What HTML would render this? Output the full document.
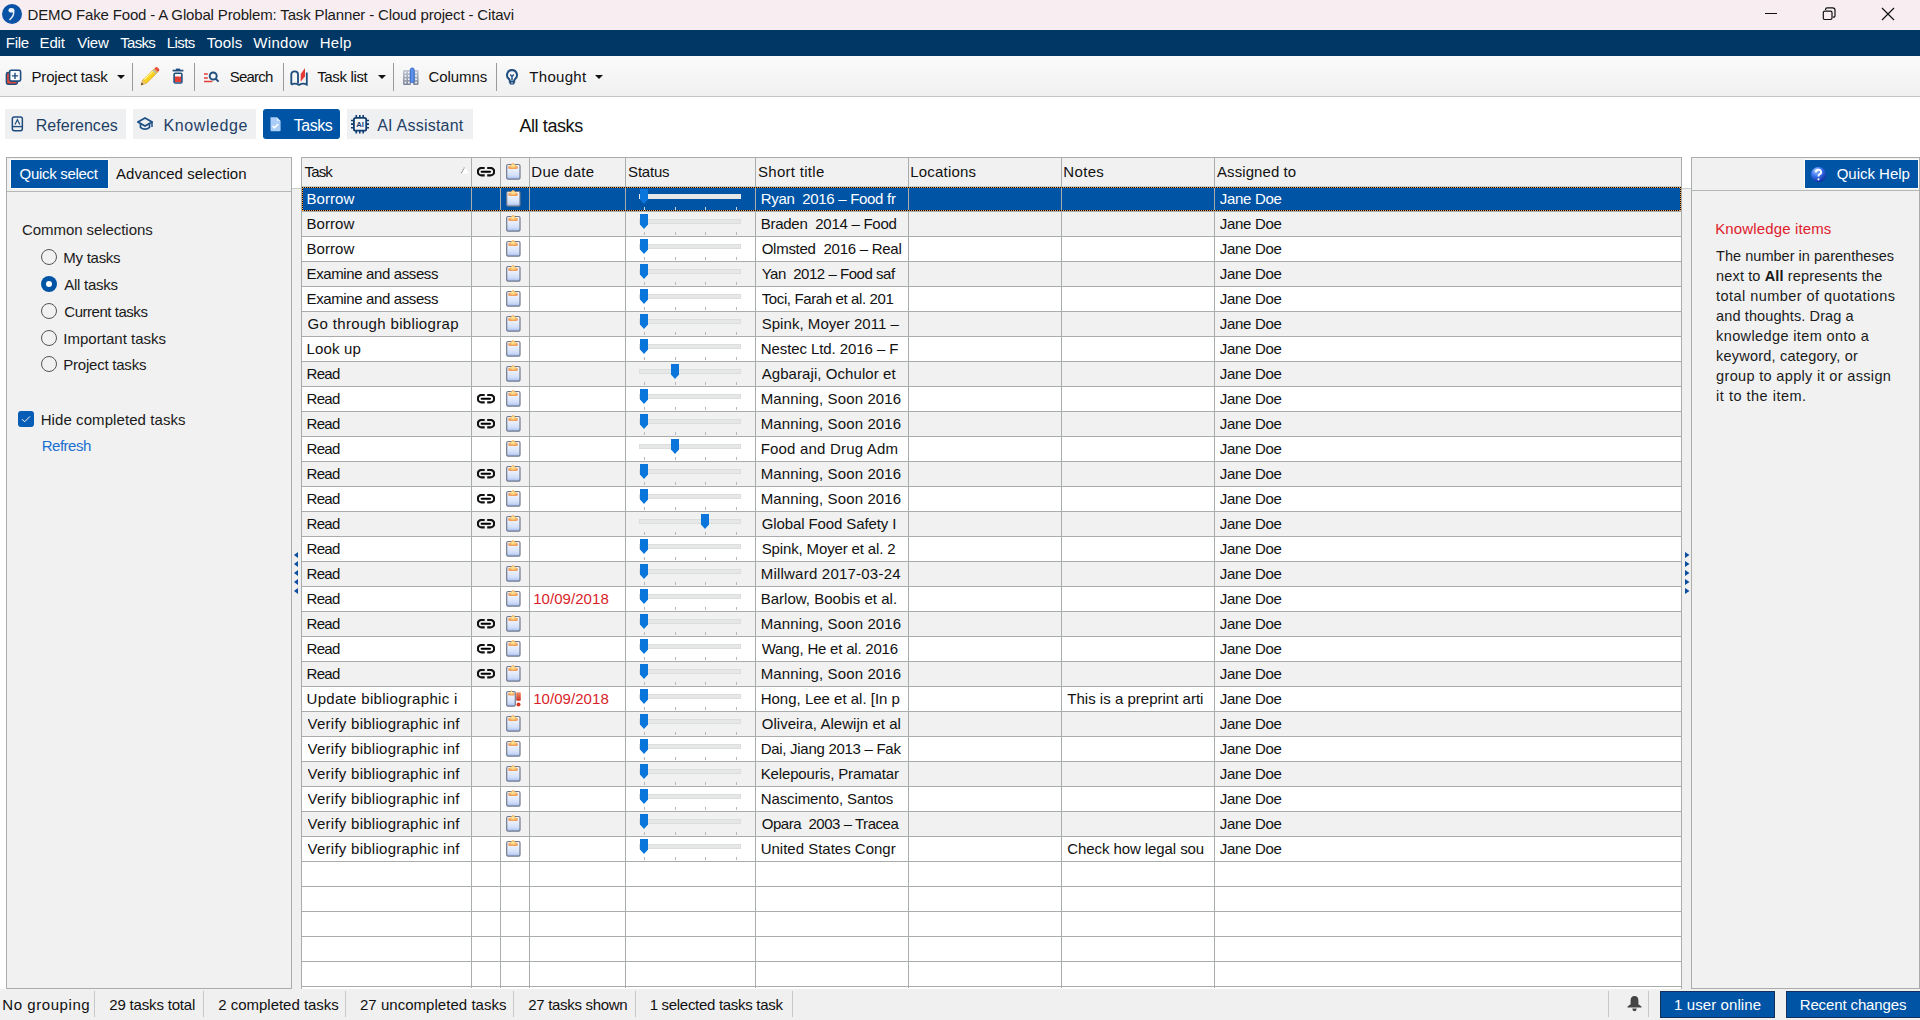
<!DOCTYPE html>
<html><head><meta charset="utf-8">
<style>
*{box-sizing:border-box;margin:0;padding:0}
html,body{width:1920px;height:1020px;overflow:hidden;background:#fff;font-family:"Liberation Sans",sans-serif;font-size:15px;color:#000;position:relative}
.abs{position:absolute}
#title{left:0;top:0;width:1920px;height:30px;background:#f8eef1}
#menu{left:0;top:30px;width:1920px;height:26px;background:#003764;color:#fff}
#menu span{position:absolute;top:4px;font-size:15px}
#tool{left:0;top:56px;width:1920px;height:41px;background:linear-gradient(#fbfbfb,#f0f0f0);border-bottom:1px solid #c4c4c4}
.tsep{position:absolute;top:7px;width:1px;height:28px;background:#9a9a9a}
.tt{position:absolute;top:12px;font-size:15px}
.dd{position:absolute;top:19px;width:0;height:0;border-left:4px solid transparent;border-right:4px solid transparent;border-top:4px solid #111}
.nav{position:absolute;top:109px;height:30px;background:#eff0f2;color:#1f3f66;font-size:16px}
.nav span{position:absolute;top:8px}
.nav.act{background:#0054a6;color:#fff;border-radius:3px}
.row{position:absolute;left:302px;width:1379px;height:24px}
.cell{position:absolute;top:0;height:24px;white-space:nowrap;overflow:hidden;font-size:15px;line-height:24px}
.vl{position:absolute;width:1px;background:#a8adab}
.hl{position:absolute;height:1px;background:#a8adab}
.trk{position:absolute;left:14px;top:7px;width:102px;height:5px;border:1px solid #dcdede}
.tick{position:absolute;top:20px;width:1px;height:3px}
.thumb{position:absolute;top:2px}
#status{left:0;top:989px;width:1920px;height:31px;background:#f0f0f0}
.st{position:absolute;top:6px;font-size:15px}
.ssep{position:absolute;top:2px;width:1px;height:26px;background:#c8c8c8}
</style></head><body>

<svg width="0" height="0" style="position:absolute"><defs><linearGradient id="cg" x1="0" y1="0" x2="0" y2="1"><stop offset="0" stop-color="#f7faff"/><stop offset="0.55" stop-color="#dfe8fb"/><stop offset="0.78" stop-color="#cfdcf8"/><stop offset="1" stop-color="#9fbaf0"/></linearGradient><radialGradient id="og" cx="0.5" cy="0.45" r="0.6"><stop offset="0" stop-color="#fff0a0"/><stop offset="0.5" stop-color="#f9c070"/><stop offset="1" stop-color="#ef8c4c"/></radialGradient><linearGradient id="rg" x1="0" y1="0" x2="0" y2="1"><stop offset="0" stop-color="#f6926a"/><stop offset="1" stop-color="#c8301e"/></linearGradient></defs></svg>
<div id="title" class="abs">
<svg class="abs" style="left:2px;top:4px" width="20" height="20" viewBox="0 0 20 20"><circle cx="10" cy="10" r="10" fill="#0a52a5"/><ellipse cx="9.4" cy="6.3" rx="2.9" ry="2.3" fill="#f2f6fb"/><path d="M11.6 6.4C12.2 10 10.6 13.2 7.9 15.5" fill="none" stroke="#e6eef8" stroke-width="1.5" stroke-linecap="round"/></svg>
<div class="abs" style="left:1765px;top:13px;width:12px;height:1px;background:#111"></div>
<svg class="abs" style="left:1822px;top:7px" width="14" height="14" viewBox="0 0 14 14"><path d="M3.6 3V2.3a1.5 1.5 0 0 1 1.5-1.5h5.6a2.3 2.3 0 0 1 2.3 2.3v5.6a1.5 1.5 0 0 1-1.5 1.5H10.8" fill="none" stroke="#111" stroke-width="1.2"/><rect x="1.3" y="4.1" width="8.7" height="8.4" rx="1.4" fill="none" stroke="#111" stroke-width="1.2"/></svg>
<svg class="abs" style="left:1881px;top:7px" width="14" height="14" viewBox="0 0 14 14"><path d="M1 1L13 13M13 1L1 13" stroke="#111" stroke-width="1.2"/></svg>
</div>
<div id="menu" class="abs">
</div>
<div id="tool" class="abs">
<svg class="abs" style="left:5px;top:13px" width="17" height="17" viewBox="0 0 17 17"><rect x="1.4" y="3.6" width="11" height="11.6" rx="1.6" fill="#e2483c" stroke="#1f4d7e" stroke-width="1.5"/><rect x="4.6" y="1.3" width="11" height="10.8" rx="1.6" fill="#fff" stroke="#1f4d7e" stroke-width="1.6"/><path d="M10 3.8v6.2M6.9 6.9h6.2" stroke="#1f4d7e" stroke-width="1.4"/></svg>
<div class="dd" style="left:117px"></div>
<div class="tsep" style="left:132px"></div>
<svg class="abs" style="left:140px;top:11px" width="20" height="19" viewBox="0 0 20 19"><path d="M1 18l1.8-5L14 2l3.5 3.3L6.3 16.3z" fill="#f7d21c" stroke="#e0a010" stroke-width="0.8"/><path d="M4.2 12.5l10.3-9.7" stroke="#fff38a" stroke-width="1.4"/><path d="M13 3l3.5 3.3" stroke="#b8b8b8" stroke-width="1.6"/><path d="M14.3 1.7l3.6 3.4 .8-.8a2 2 0 0 0-.1-2.8l-.8-.8a2 2 0 0 0-2.7 0z" fill="#e84d3c"/><path d="M1 18l1.8-5 3.5 3.3z" fill="#e8c27a"/><path d="M1 18l.8-2.2 1.5 1.4z" fill="#222"/></svg>
<svg class="abs" style="left:172px;top:12px" width="12" height="16" viewBox="0 0 12 16"><path d="M0.6 2.6h10.8" stroke="#1f4d7e" stroke-width="1.7"/><path d="M3.8 1.3h4.4" stroke="#1f4d7e" stroke-width="1.4"/><path d="M2.8 8.6c2-.5 4.4.4 6.4-.1V14H2.8z" fill="#e43c37"/><rect x="2.1" y="5.2" width="7.8" height="9.8" rx="1.3" fill="none" stroke="#1f4d7e" stroke-width="1.6"/></svg>
<div class="tsep" style="left:194px"></div>
<svg class="abs" style="left:203px;top:14px" width="17" height="14" viewBox="0 0 17 14"><path d="M1 4h3.8M1 8h3.8M1 11.6h8.4" stroke="#e43c37" stroke-width="1.5"/><circle cx="10.2" cy="6" r="3.5" fill="none" stroke="#1f4d7e" stroke-width="1.9"/><path d="M12.6 8.6L15.6 11.6" stroke="#1f4d7e" stroke-width="2"/></svg>
<div class="tsep" style="left:283px"></div>
<svg class="abs" style="left:289px;top:11px" width="19" height="20" viewBox="0 0 19 20"><path d="M2.3 17.6V7.2Q2.3 4.4 5.7 4.4Q9 4.4 9 7.2V16.6" fill="none" stroke="#1f4d7e" stroke-width="1.8"/><path d="M2.3 17.6Q6 15.6 10 18Q14 15.6 17.8 17.6V5.6" fill="none" stroke="#1f4d7e" stroke-width="1.8"/><path d="M11.7 7L16 1V9.6L11.7 14.8z" fill="#e43c37"/></svg>
<div class="dd" style="left:378px"></div>
<div class="tsep" style="left:393px"></div>
<svg class="abs" style="left:402px;top:11px" width="18" height="19" viewBox="0 0 18 19"><defs><linearGradient id="colg" x1="0" y1="0" x2="0" y2="1"><stop offset="0" stop-color="#c3c8d1"/><stop offset="1" stop-color="#7b8598"/></linearGradient></defs><rect x="1" y="3" width="8" height="15" rx="1.3" fill="url(#colg)"/><rect x="11" y="3" width="5.6" height="15" rx="1.3" fill="url(#colg)"/><rect x="2.6" y="4.7" width="1.7" height="1.7" fill="#f2f5fc"/><rect x="2.6" y="8.0" width="1.7" height="1.7" fill="#f2f5fc"/><rect x="2.6" y="11.4" width="1.7" height="1.7" fill="#f2f5fc"/><rect x="2.6" y="14.7" width="1.7" height="1.7" fill="#f2f5fc"/><rect x="6.0" y="4.7" width="1.7" height="1.7" fill="#f2f5fc"/><rect x="6.0" y="8.0" width="1.7" height="1.7" fill="#f2f5fc"/><rect x="6.0" y="11.4" width="1.7" height="1.7" fill="#f2f5fc"/><rect x="6.0" y="14.7" width="1.7" height="1.7" fill="#f2f5fc"/><rect x="13.2" y="4.7" width="1.7" height="1.7" fill="#f2f5fc"/><rect x="13.2" y="8.0" width="1.7" height="1.7" fill="#f2f5fc"/><rect x="13.2" y="11.4" width="1.7" height="1.7" fill="#f2f5fc"/><rect x="13.2" y="14.7" width="1.7" height="1.7" fill="#f2f5fc"/><rect x="8.3" y="1" width="3.9" height="14.6" rx="1.9" fill="#5b8fea" stroke="#2f66cc" stroke-width="0.9"/></svg>
<div class="tsep" style="left:496px"></div>
<svg class="abs" style="left:505px;top:13px" width="14" height="16" viewBox="0 0 14 16"><path d="M7 1a5 5 0 0 0-3.1 8.9c.6.5.9 1.1.9 1.8V12.6h4.4V11.7c0-.7.3-1.3.9-1.8A5 5 0 0 0 7 1z" fill="none" stroke="#1f4d7e" stroke-width="2"/><path d="M5.2 5.6L7 7.4L8.8 5.6M7 7.4V11" fill="none" stroke="#1f4d7e" stroke-width="1.4"/><rect x="4.5" y="12.3" width="5" height="3.2" rx="1" fill="#1f4d7e"/><rect x="6" y="13" width="2" height="1.5" fill="#8aa2bd"/></svg>
<div class="dd" style="left:595px"></div>

</div>
<div class="nav" style="left:5px;width:121px"><svg class="abs" style="left:6px;top:7px" width="13" height="16" viewBox="0 0 13 16"><rect x="1.35" y="1.05" width="10" height="13.6" rx="1.8" fill="none" stroke="#1f4d7e" stroke-width="1.5"/><path d="M1.35 10.6H11.35" stroke="#1f4d7e" stroke-width="1.4"/><path d="M4 8.6L6.4 3.7L8.8 8.6" fill="none" stroke="#1f4d7e" stroke-width="1.2"/></svg></div>
<div class="nav" style="left:133px;width:123px"><svg class="abs" style="left:4px;top:8px" width="16" height="14" viewBox="0 0 16 14"><path d="M8 1L1 5l7 4 7-4z" fill="none" stroke="#1f4f86" stroke-width="1.7"/><path d="M3.5 6.8v3.5c2.5 2.5 6.5 2.5 9 0V6.8" fill="none" stroke="#1f4f86" stroke-width="1.7"/><path d="M15 5v5" stroke="#1f4f86" stroke-width="1.5"/></svg></div>
<div class="nav act" style="left:263px;width:77px"><svg class="abs" style="left:6px;top:7px" width="13" height="16" viewBox="0 0 13 16"><path d="M1.5 1.2h6.3l3.8 3.8v9.2a1 1 0 0 1-1 1H2.5a1 1 0 0 1-1-1z" fill="#a9cdf6"/><path d="M7.8 1.2v3.8h3.8" fill="#d8e9fb"/><path d="M3.6 10l1.9 1.9 3.6-3.8" fill="none" stroke="#fff" stroke-width="1.5"/></svg></div>
<div class="nav" style="left:347px;width:126px"><svg class="abs" style="left:3px;top:4px" width="20" height="21" viewBox="0 0 20 21"><path d="M6.3 2v3M9.8 2v3M13.2 2v3M6.3 17.5v3M9.8 17.5v3M13.2 17.5v3M1 7.5h3M1 11.1h3M1 14.7h3M16 7.5h3M16 11.1h3M16 14.7h3" stroke="#0f3d70" stroke-width="1.6"/><rect x="3.9" y="4.9" width="12.3" height="12.8" rx="1.8" fill="#f5f6f8" stroke="#0f3d70" stroke-width="1.8"/><text x="10.1" y="13.9" font-size="7.6" font-family="Liberation Sans" font-weight="bold" text-anchor="middle" fill="#0f3d70">AI</text></svg></div>

<div class="abs" style="left:6px;top:157px;width:286px;height:832px;background:#f1f1f1;border:1px solid #a9adab"></div>
<div class="abs" style="left:7px;top:191px;width:284px;height:1px;background:#b4b9b6"></div>
<div class="abs" style="left:10px;top:159px;width:99px;height:30px;background:#fffdf8"></div><div class="abs" style="left:11px;top:160px;width:97px;height:28px;background:#0054a6"></div>

<div class="abs" style="left:41px;top:249px;width:16px;height:16px;border-radius:50%;border:1px solid #555"></div>
<div class="abs" style="left:41px;top:276px;width:16px;height:16px;border-radius:50%;background:#0054a6"></div><div class="abs" style="left:46px;top:281px;width:6px;height:6px;border-radius:50%;background:#fff"></div>
<div class="abs" style="left:41px;top:303px;width:16px;height:16px;border-radius:50%;border:1px solid #555"></div>
<div class="abs" style="left:41px;top:330px;width:16px;height:16px;border-radius:50%;border:1px solid #555"></div>
<div class="abs" style="left:41px;top:356px;width:16px;height:16px;border-radius:50%;border:1px solid #555"></div>
<div class="abs" style="left:18px;top:411px;width:16px;height:16px;border-radius:3px;background:#075db6"></div>
<svg class="abs" style="left:18px;top:411px" width="16" height="16" viewBox="0 0 16 16"><path d="M4 8.2l2.6 2.6L12 5.4" fill="none" stroke="#fff" stroke-width="1"/></svg>

<div class="abs" style="left:292px;top:188px;width:9px;height:801px;background:#f0f0f0"></div>
<div class="abs" style="left:292px;top:188px;width:9px;height:1px;background:#c8cccb"></div>
<div class="abs" style="left:1682px;top:188px;width:9px;height:801px;background:#f0f0f0"></div>
<div class="abs" style="left:1682px;top:188px;width:9px;height:1px;background:#c8cccb"></div>
<svg class="abs" style="left:293.5px;top:552px" width="4" height="6" viewBox="0 0 4 6"><path d="M4 0V6L0 3z" fill="#0a4c9e"/></svg>
<svg class="abs" style="left:1685px;top:552px" width="4.5" height="6" viewBox="0 0 4.5 6"><path d="M0 0V6L4.5 3z" fill="#0a4c9e"/></svg>
<svg class="abs" style="left:293.5px;top:561px" width="4" height="6" viewBox="0 0 4 6"><path d="M4 0V6L0 3z" fill="#0a4c9e"/></svg>
<svg class="abs" style="left:1685px;top:561px" width="4.5" height="6" viewBox="0 0 4.5 6"><path d="M0 0V6L4.5 3z" fill="#0a4c9e"/></svg>
<svg class="abs" style="left:293.5px;top:570px" width="4" height="6" viewBox="0 0 4 6"><path d="M4 0V6L0 3z" fill="#0a4c9e"/></svg>
<svg class="abs" style="left:1685px;top:570px" width="4.5" height="6" viewBox="0 0 4.5 6"><path d="M0 0V6L4.5 3z" fill="#0a4c9e"/></svg>
<svg class="abs" style="left:293.5px;top:579px" width="4" height="6" viewBox="0 0 4 6"><path d="M4 0V6L0 3z" fill="#0a4c9e"/></svg>
<svg class="abs" style="left:1685px;top:579px" width="4.5" height="6" viewBox="0 0 4.5 6"><path d="M0 0V6L4.5 3z" fill="#0a4c9e"/></svg>
<svg class="abs" style="left:293.5px;top:588px" width="4" height="6" viewBox="0 0 4 6"><path d="M4 0V6L0 3z" fill="#0a4c9e"/></svg>
<svg class="abs" style="left:1685px;top:588px" width="4.5" height="6" viewBox="0 0 4.5 6"><path d="M0 0V6L4.5 3z" fill="#0a4c9e"/></svg>
<div class="abs" style="left:301px;top:157px;width:1381px;height:830px;background:#fff;border:1px solid #a8adab"></div>
<div class="abs" style="left:302px;top:158px;width:1379px;height:29px;background:#f1f1f1"></div>
<svg class="abs" style="left:460px;top:166px" width="10" height="8" viewBox="0 0 10 8"><path d="M4.5 0.8L9.2 7.6H0.8z" fill="#fff"/><path d="M1.2 7.2L4.6 1.2" stroke="#8a8a8a" stroke-width="1.1" stroke-dasharray="1.2 0.6"/></svg>
<div class="abs" style="left:477px;top:167px;line-height:0"><svg width="18" height="10" viewBox="0 0 18 10"><path d="M7.7 0.9H4.6a3.75 3.75 0 0 0 0 7.5H7.7M10.2 0.9h3.2a3.75 3.75 0 0 1 0 7.5H10.2" fill="none" stroke="#111" stroke-width="2.2"/><path d="M4.6 4.65H13" stroke="#000" stroke-width="2" stroke-linecap="round"/></svg></div>
<div class="abs" style="left:505px;top:162px;line-height:0"><svg width="17" height="19" viewBox="0 0 17 19"><rect x="1.7" y="2.5" width="13.3" height="14.6" rx="1.4" fill="url(#cg)" stroke="#70798a" stroke-width="1.2"/><path d="M3.1 5.6Q3.1 3.3 5.6 3.2H6.1Q6.7 1 8.1 1Q9.5 1 10.1 3.2H10.6Q13 3.3 13 5.6Q13 7 11 7H5.1Q3.1 7 3.1 5.6z" fill="url(#og)"/></svg></div>
<div class="row" style="top:187px;background:#0054a6;color:#fff">
<div class="cell" style="left:4.50px;width:165px;letter-spacing:0.064px">Borrow</div>
<div class="abs" style="left:203px;top:2px;line-height:0"><svg width="17" height="19" viewBox="0 0 17 19"><rect x="1.7" y="2.5" width="13.3" height="14.6" rx="1.4" fill="url(#cg)" stroke="#70798a" stroke-width="1.2"/><path d="M3.1 5.6Q3.1 3.3 5.6 3.2H6.1Q6.7 1 8.1 1Q9.5 1 10.1 3.2H10.6Q13 3.3 13 5.6Q13 7 11 7H5.1Q3.1 7 3.1 5.6z" fill="url(#og)"/></svg></div>
<div class="abs" style="left:323px;top:0;width:130px;height:24px"><div class="trk" style="background:#e6e8e8;border-color:#e6e8e8"></div><div class="tick" style="left:19px;background:#d8d8d8"></div><div class="tick" style="left:50px;background:#d8d8d8"></div><div class="tick" style="left:80px;background:#d8d8d8"></div><div class="tick" style="left:111px;background:#d8d8d8"></div><svg class="thumb" style="left:15px" width="8" height="15" viewBox="0 0 8 15"><path d="M0 0H8V10.5L4 15L0 10.5Z" fill="#0a76dc"/></svg></div>
<div class="cell" style="left:458.70px;width:146px;letter-spacing:-0.301px">Ryan  2016 – Food fr</div>
<div class="cell" style="left:917.80px;width:200px;letter-spacing:-0.310px">Jane Doe</div>
</div>
<div class="row" style="top:212px;background:#f1f1f1;color:#111">
<div class="cell" style="left:4.50px;width:165px;letter-spacing:0.064px">Borrow</div>
<div class="abs" style="left:203px;top:2px;line-height:0"><svg width="17" height="19" viewBox="0 0 17 19"><rect x="1.7" y="2.5" width="13.3" height="14.6" rx="1.4" fill="url(#cg)" stroke="#70798a" stroke-width="1.2"/><path d="M3.1 5.6Q3.1 3.3 5.6 3.2H6.1Q6.7 1 8.1 1Q9.5 1 10.1 3.2H10.6Q13 3.3 13 5.6Q13 7 11 7H5.1Q3.1 7 3.1 5.6z" fill="url(#og)"/></svg></div>
<div class="abs" style="left:323px;top:0;width:130px;height:24px"><div class="trk" style="background:#e6e8e8;border-color:#dcdede"></div><div class="tick" style="left:19px;background:#b8b8b8"></div><div class="tick" style="left:50px;background:#b8b8b8"></div><div class="tick" style="left:80px;background:#b8b8b8"></div><div class="tick" style="left:111px;background:#b8b8b8"></div><svg class="thumb" style="left:15px" width="8" height="15" viewBox="0 0 8 15"><path d="M0 0H8V10.5L4 15L0 10.5Z" fill="#0a76dc"/></svg></div>
<div class="cell" style="left:458.70px;width:146px;letter-spacing:-0.267px">Braden  2014 – Food</div>
<div class="cell" style="left:917.80px;width:200px;letter-spacing:-0.310px">Jane Doe</div>
</div>
<div class="row" style="top:237px;background:#fff;color:#111">
<div class="cell" style="left:4.50px;width:165px;letter-spacing:0.064px">Borrow</div>
<div class="abs" style="left:203px;top:2px;line-height:0"><svg width="17" height="19" viewBox="0 0 17 19"><rect x="1.7" y="2.5" width="13.3" height="14.6" rx="1.4" fill="url(#cg)" stroke="#70798a" stroke-width="1.2"/><path d="M3.1 5.6Q3.1 3.3 5.6 3.2H6.1Q6.7 1 8.1 1Q9.5 1 10.1 3.2H10.6Q13 3.3 13 5.6Q13 7 11 7H5.1Q3.1 7 3.1 5.6z" fill="url(#og)"/></svg></div>
<div class="abs" style="left:323px;top:0;width:130px;height:24px"><div class="trk" style="background:#e6e8e8;border-color:#dcdede"></div><div class="tick" style="left:19px;background:#b8b8b8"></div><div class="tick" style="left:50px;background:#b8b8b8"></div><div class="tick" style="left:80px;background:#b8b8b8"></div><div class="tick" style="left:111px;background:#b8b8b8"></div><svg class="thumb" style="left:15px" width="8" height="15" viewBox="0 0 8 15"><path d="M0 0H8V10.5L4 15L0 10.5Z" fill="#0a76dc"/></svg></div>
<div class="cell" style="left:459.70px;width:146px;letter-spacing:-0.266px">Olmsted  2016 – Real</div>
<div class="cell" style="left:917.80px;width:200px;letter-spacing:-0.310px">Jane Doe</div>
</div>
<div class="row" style="top:262px;background:#f1f1f1;color:#111">
<div class="cell" style="left:4.50px;width:165px;letter-spacing:-0.377px">Examine and assess</div>
<div class="abs" style="left:203px;top:2px;line-height:0"><svg width="17" height="19" viewBox="0 0 17 19"><rect x="1.7" y="2.5" width="13.3" height="14.6" rx="1.4" fill="url(#cg)" stroke="#70798a" stroke-width="1.2"/><path d="M3.1 5.6Q3.1 3.3 5.6 3.2H6.1Q6.7 1 8.1 1Q9.5 1 10.1 3.2H10.6Q13 3.3 13 5.6Q13 7 11 7H5.1Q3.1 7 3.1 5.6z" fill="url(#og)"/></svg></div>
<div class="abs" style="left:323px;top:0;width:130px;height:24px"><div class="trk" style="background:#e6e8e8;border-color:#dcdede"></div><div class="tick" style="left:19px;background:#b8b8b8"></div><div class="tick" style="left:50px;background:#b8b8b8"></div><div class="tick" style="left:80px;background:#b8b8b8"></div><div class="tick" style="left:111px;background:#b8b8b8"></div><svg class="thumb" style="left:15px" width="8" height="15" viewBox="0 0 8 15"><path d="M0 0H8V10.5L4 15L0 10.5Z" fill="#0a76dc"/></svg></div>
<div class="cell" style="left:459.70px;width:146px;letter-spacing:-0.471px">Yan  2012 – Food saf</div>
<div class="cell" style="left:917.80px;width:200px;letter-spacing:-0.310px">Jane Doe</div>
</div>
<div class="row" style="top:287px;background:#fff;color:#111">
<div class="cell" style="left:4.50px;width:165px;letter-spacing:-0.377px">Examine and assess</div>
<div class="abs" style="left:203px;top:2px;line-height:0"><svg width="17" height="19" viewBox="0 0 17 19"><rect x="1.7" y="2.5" width="13.3" height="14.6" rx="1.4" fill="url(#cg)" stroke="#70798a" stroke-width="1.2"/><path d="M3.1 5.6Q3.1 3.3 5.6 3.2H6.1Q6.7 1 8.1 1Q9.5 1 10.1 3.2H10.6Q13 3.3 13 5.6Q13 7 11 7H5.1Q3.1 7 3.1 5.6z" fill="url(#og)"/></svg></div>
<div class="abs" style="left:323px;top:0;width:130px;height:24px"><div class="trk" style="background:#e6e8e8;border-color:#dcdede"></div><div class="tick" style="left:19px;background:#b8b8b8"></div><div class="tick" style="left:50px;background:#b8b8b8"></div><div class="tick" style="left:80px;background:#b8b8b8"></div><div class="tick" style="left:111px;background:#b8b8b8"></div><svg class="thumb" style="left:15px" width="8" height="15" viewBox="0 0 8 15"><path d="M0 0H8V10.5L4 15L0 10.5Z" fill="#0a76dc"/></svg></div>
<div class="cell" style="left:459.70px;width:146px;letter-spacing:-0.383px">Toci, Farah et al. 201</div>
<div class="cell" style="left:917.80px;width:200px;letter-spacing:-0.310px">Jane Doe</div>
</div>
<div class="row" style="top:312px;background:#f1f1f1;color:#111">
<div class="cell" style="left:5.50px;width:165px;letter-spacing:0.341px">Go through bibliograp</div>
<div class="abs" style="left:203px;top:2px;line-height:0"><svg width="17" height="19" viewBox="0 0 17 19"><rect x="1.7" y="2.5" width="13.3" height="14.6" rx="1.4" fill="url(#cg)" stroke="#70798a" stroke-width="1.2"/><path d="M3.1 5.6Q3.1 3.3 5.6 3.2H6.1Q6.7 1 8.1 1Q9.5 1 10.1 3.2H10.6Q13 3.3 13 5.6Q13 7 11 7H5.1Q3.1 7 3.1 5.6z" fill="url(#og)"/></svg></div>
<div class="abs" style="left:323px;top:0;width:130px;height:24px"><div class="trk" style="background:#e6e8e8;border-color:#dcdede"></div><div class="tick" style="left:19px;background:#b8b8b8"></div><div class="tick" style="left:50px;background:#b8b8b8"></div><div class="tick" style="left:80px;background:#b8b8b8"></div><div class="tick" style="left:111px;background:#b8b8b8"></div><svg class="thumb" style="left:15px" width="8" height="15" viewBox="0 0 8 15"><path d="M0 0H8V10.5L4 15L0 10.5Z" fill="#0a76dc"/></svg></div>
<div class="cell" style="left:459.70px;width:146px;letter-spacing:0.043px">Spink, Moyer 2011 –</div>
<div class="cell" style="left:917.80px;width:200px;letter-spacing:-0.310px">Jane Doe</div>
</div>
<div class="row" style="top:337px;background:#fff;color:#111">
<div class="cell" style="left:4.50px;width:165px;letter-spacing:0.161px">Look up</div>
<div class="abs" style="left:203px;top:2px;line-height:0"><svg width="17" height="19" viewBox="0 0 17 19"><rect x="1.7" y="2.5" width="13.3" height="14.6" rx="1.4" fill="url(#cg)" stroke="#70798a" stroke-width="1.2"/><path d="M3.1 5.6Q3.1 3.3 5.6 3.2H6.1Q6.7 1 8.1 1Q9.5 1 10.1 3.2H10.6Q13 3.3 13 5.6Q13 7 11 7H5.1Q3.1 7 3.1 5.6z" fill="url(#og)"/></svg></div>
<div class="abs" style="left:323px;top:0;width:130px;height:24px"><div class="trk" style="background:#e6e8e8;border-color:#dcdede"></div><div class="tick" style="left:19px;background:#b8b8b8"></div><div class="tick" style="left:50px;background:#b8b8b8"></div><div class="tick" style="left:80px;background:#b8b8b8"></div><div class="tick" style="left:111px;background:#b8b8b8"></div><svg class="thumb" style="left:15px" width="8" height="15" viewBox="0 0 8 15"><path d="M0 0H8V10.5L4 15L0 10.5Z" fill="#0a76dc"/></svg></div>
<div class="cell" style="left:458.70px;width:146px;letter-spacing:-0.078px">Nestec Ltd. 2016 – F</div>
<div class="cell" style="left:917.80px;width:200px;letter-spacing:-0.310px">Jane Doe</div>
</div>
<div class="row" style="top:362px;background:#f1f1f1;color:#111">
<div class="cell" style="left:4.50px;width:165px;letter-spacing:-0.672px">Read</div>
<div class="abs" style="left:203px;top:2px;line-height:0"><svg width="17" height="19" viewBox="0 0 17 19"><rect x="1.7" y="2.5" width="13.3" height="14.6" rx="1.4" fill="url(#cg)" stroke="#70798a" stroke-width="1.2"/><path d="M3.1 5.6Q3.1 3.3 5.6 3.2H6.1Q6.7 1 8.1 1Q9.5 1 10.1 3.2H10.6Q13 3.3 13 5.6Q13 7 11 7H5.1Q3.1 7 3.1 5.6z" fill="url(#og)"/></svg></div>
<div class="abs" style="left:323px;top:0;width:130px;height:24px"><div class="trk" style="background:#e6e8e8;border-color:#dcdede"></div><div class="tick" style="left:19px;background:#b8b8b8"></div><div class="tick" style="left:50px;background:#b8b8b8"></div><div class="tick" style="left:80px;background:#b8b8b8"></div><div class="tick" style="left:111px;background:#b8b8b8"></div><svg class="thumb" style="left:46px" width="8" height="15" viewBox="0 0 8 15"><path d="M0 0H8V10.5L4 15L0 10.5Z" fill="#0a76dc"/></svg></div>
<div class="cell" style="left:459.70px;width:146px;letter-spacing:0.074px">Agbaraji, Ochulor et</div>
<div class="cell" style="left:917.80px;width:200px;letter-spacing:-0.310px">Jane Doe</div>
</div>
<div class="row" style="top:387px;background:#fff;color:#111">
<div class="cell" style="left:4.50px;width:165px;letter-spacing:-0.672px">Read</div>
<div class="abs" style="left:175px;top:7px;line-height:0"><svg width="18" height="10" viewBox="0 0 18 10"><path d="M7.7 0.9H4.6a3.75 3.75 0 0 0 0 7.5H7.7M10.2 0.9h3.2a3.75 3.75 0 0 1 0 7.5H10.2" fill="none" stroke="#111" stroke-width="2.2"/><path d="M4.6 4.65H13" stroke="#000" stroke-width="2" stroke-linecap="round"/></svg></div>
<div class="abs" style="left:203px;top:2px;line-height:0"><svg width="17" height="19" viewBox="0 0 17 19"><rect x="1.7" y="2.5" width="13.3" height="14.6" rx="1.4" fill="url(#cg)" stroke="#70798a" stroke-width="1.2"/><path d="M3.1 5.6Q3.1 3.3 5.6 3.2H6.1Q6.7 1 8.1 1Q9.5 1 10.1 3.2H10.6Q13 3.3 13 5.6Q13 7 11 7H5.1Q3.1 7 3.1 5.6z" fill="url(#og)"/></svg></div>
<div class="abs" style="left:323px;top:0;width:130px;height:24px"><div class="trk" style="background:#e6e8e8;border-color:#dcdede"></div><div class="tick" style="left:19px;background:#b8b8b8"></div><div class="tick" style="left:50px;background:#b8b8b8"></div><div class="tick" style="left:80px;background:#b8b8b8"></div><div class="tick" style="left:111px;background:#b8b8b8"></div><svg class="thumb" style="left:15px" width="8" height="15" viewBox="0 0 8 15"><path d="M0 0H8V10.5L4 15L0 10.5Z" fill="#0a76dc"/></svg></div>
<div class="cell" style="left:458.70px;width:146px;letter-spacing:0.118px">Manning, Soon 2016</div>
<div class="cell" style="left:917.80px;width:200px;letter-spacing:-0.310px">Jane Doe</div>
</div>
<div class="row" style="top:412px;background:#f1f1f1;color:#111">
<div class="cell" style="left:4.50px;width:165px;letter-spacing:-0.672px">Read</div>
<div class="abs" style="left:175px;top:7px;line-height:0"><svg width="18" height="10" viewBox="0 0 18 10"><path d="M7.7 0.9H4.6a3.75 3.75 0 0 0 0 7.5H7.7M10.2 0.9h3.2a3.75 3.75 0 0 1 0 7.5H10.2" fill="none" stroke="#111" stroke-width="2.2"/><path d="M4.6 4.65H13" stroke="#000" stroke-width="2" stroke-linecap="round"/></svg></div>
<div class="abs" style="left:203px;top:2px;line-height:0"><svg width="17" height="19" viewBox="0 0 17 19"><rect x="1.7" y="2.5" width="13.3" height="14.6" rx="1.4" fill="url(#cg)" stroke="#70798a" stroke-width="1.2"/><path d="M3.1 5.6Q3.1 3.3 5.6 3.2H6.1Q6.7 1 8.1 1Q9.5 1 10.1 3.2H10.6Q13 3.3 13 5.6Q13 7 11 7H5.1Q3.1 7 3.1 5.6z" fill="url(#og)"/></svg></div>
<div class="abs" style="left:323px;top:0;width:130px;height:24px"><div class="trk" style="background:#e6e8e8;border-color:#dcdede"></div><div class="tick" style="left:19px;background:#b8b8b8"></div><div class="tick" style="left:50px;background:#b8b8b8"></div><div class="tick" style="left:80px;background:#b8b8b8"></div><div class="tick" style="left:111px;background:#b8b8b8"></div><svg class="thumb" style="left:15px" width="8" height="15" viewBox="0 0 8 15"><path d="M0 0H8V10.5L4 15L0 10.5Z" fill="#0a76dc"/></svg></div>
<div class="cell" style="left:458.70px;width:146px;letter-spacing:0.118px">Manning, Soon 2016</div>
<div class="cell" style="left:917.80px;width:200px;letter-spacing:-0.310px">Jane Doe</div>
</div>
<div class="row" style="top:437px;background:#fff;color:#111">
<div class="cell" style="left:4.50px;width:165px;letter-spacing:-0.672px">Read</div>
<div class="abs" style="left:203px;top:2px;line-height:0"><svg width="17" height="19" viewBox="0 0 17 19"><rect x="1.7" y="2.5" width="13.3" height="14.6" rx="1.4" fill="url(#cg)" stroke="#70798a" stroke-width="1.2"/><path d="M3.1 5.6Q3.1 3.3 5.6 3.2H6.1Q6.7 1 8.1 1Q9.5 1 10.1 3.2H10.6Q13 3.3 13 5.6Q13 7 11 7H5.1Q3.1 7 3.1 5.6z" fill="url(#og)"/></svg></div>
<div class="abs" style="left:323px;top:0;width:130px;height:24px"><div class="trk" style="background:#e6e8e8;border-color:#dcdede"></div><div class="tick" style="left:19px;background:#b8b8b8"></div><div class="tick" style="left:50px;background:#b8b8b8"></div><div class="tick" style="left:80px;background:#b8b8b8"></div><div class="tick" style="left:111px;background:#b8b8b8"></div><svg class="thumb" style="left:46px" width="8" height="15" viewBox="0 0 8 15"><path d="M0 0H8V10.5L4 15L0 10.5Z" fill="#0a76dc"/></svg></div>
<div class="cell" style="left:458.70px;width:146px;letter-spacing:0.189px">Food and Drug Adm</div>
<div class="cell" style="left:917.80px;width:200px;letter-spacing:-0.310px">Jane Doe</div>
</div>
<div class="row" style="top:462px;background:#f1f1f1;color:#111">
<div class="cell" style="left:4.50px;width:165px;letter-spacing:-0.672px">Read</div>
<div class="abs" style="left:175px;top:7px;line-height:0"><svg width="18" height="10" viewBox="0 0 18 10"><path d="M7.7 0.9H4.6a3.75 3.75 0 0 0 0 7.5H7.7M10.2 0.9h3.2a3.75 3.75 0 0 1 0 7.5H10.2" fill="none" stroke="#111" stroke-width="2.2"/><path d="M4.6 4.65H13" stroke="#000" stroke-width="2" stroke-linecap="round"/></svg></div>
<div class="abs" style="left:203px;top:2px;line-height:0"><svg width="17" height="19" viewBox="0 0 17 19"><rect x="1.7" y="2.5" width="13.3" height="14.6" rx="1.4" fill="url(#cg)" stroke="#70798a" stroke-width="1.2"/><path d="M3.1 5.6Q3.1 3.3 5.6 3.2H6.1Q6.7 1 8.1 1Q9.5 1 10.1 3.2H10.6Q13 3.3 13 5.6Q13 7 11 7H5.1Q3.1 7 3.1 5.6z" fill="url(#og)"/></svg></div>
<div class="abs" style="left:323px;top:0;width:130px;height:24px"><div class="trk" style="background:#e6e8e8;border-color:#dcdede"></div><div class="tick" style="left:19px;background:#b8b8b8"></div><div class="tick" style="left:50px;background:#b8b8b8"></div><div class="tick" style="left:80px;background:#b8b8b8"></div><div class="tick" style="left:111px;background:#b8b8b8"></div><svg class="thumb" style="left:15px" width="8" height="15" viewBox="0 0 8 15"><path d="M0 0H8V10.5L4 15L0 10.5Z" fill="#0a76dc"/></svg></div>
<div class="cell" style="left:458.70px;width:146px;letter-spacing:0.118px">Manning, Soon 2016</div>
<div class="cell" style="left:917.80px;width:200px;letter-spacing:-0.310px">Jane Doe</div>
</div>
<div class="row" style="top:487px;background:#fff;color:#111">
<div class="cell" style="left:4.50px;width:165px;letter-spacing:-0.672px">Read</div>
<div class="abs" style="left:175px;top:7px;line-height:0"><svg width="18" height="10" viewBox="0 0 18 10"><path d="M7.7 0.9H4.6a3.75 3.75 0 0 0 0 7.5H7.7M10.2 0.9h3.2a3.75 3.75 0 0 1 0 7.5H10.2" fill="none" stroke="#111" stroke-width="2.2"/><path d="M4.6 4.65H13" stroke="#000" stroke-width="2" stroke-linecap="round"/></svg></div>
<div class="abs" style="left:203px;top:2px;line-height:0"><svg width="17" height="19" viewBox="0 0 17 19"><rect x="1.7" y="2.5" width="13.3" height="14.6" rx="1.4" fill="url(#cg)" stroke="#70798a" stroke-width="1.2"/><path d="M3.1 5.6Q3.1 3.3 5.6 3.2H6.1Q6.7 1 8.1 1Q9.5 1 10.1 3.2H10.6Q13 3.3 13 5.6Q13 7 11 7H5.1Q3.1 7 3.1 5.6z" fill="url(#og)"/></svg></div>
<div class="abs" style="left:323px;top:0;width:130px;height:24px"><div class="trk" style="background:#e6e8e8;border-color:#dcdede"></div><div class="tick" style="left:19px;background:#b8b8b8"></div><div class="tick" style="left:50px;background:#b8b8b8"></div><div class="tick" style="left:80px;background:#b8b8b8"></div><div class="tick" style="left:111px;background:#b8b8b8"></div><svg class="thumb" style="left:15px" width="8" height="15" viewBox="0 0 8 15"><path d="M0 0H8V10.5L4 15L0 10.5Z" fill="#0a76dc"/></svg></div>
<div class="cell" style="left:458.70px;width:146px;letter-spacing:0.118px">Manning, Soon 2016</div>
<div class="cell" style="left:917.80px;width:200px;letter-spacing:-0.310px">Jane Doe</div>
</div>
<div class="row" style="top:512px;background:#f1f1f1;color:#111">
<div class="cell" style="left:4.50px;width:165px;letter-spacing:-0.672px">Read</div>
<div class="abs" style="left:175px;top:7px;line-height:0"><svg width="18" height="10" viewBox="0 0 18 10"><path d="M7.7 0.9H4.6a3.75 3.75 0 0 0 0 7.5H7.7M10.2 0.9h3.2a3.75 3.75 0 0 1 0 7.5H10.2" fill="none" stroke="#111" stroke-width="2.2"/><path d="M4.6 4.65H13" stroke="#000" stroke-width="2" stroke-linecap="round"/></svg></div>
<div class="abs" style="left:203px;top:2px;line-height:0"><svg width="17" height="19" viewBox="0 0 17 19"><rect x="1.7" y="2.5" width="13.3" height="14.6" rx="1.4" fill="url(#cg)" stroke="#70798a" stroke-width="1.2"/><path d="M3.1 5.6Q3.1 3.3 5.6 3.2H6.1Q6.7 1 8.1 1Q9.5 1 10.1 3.2H10.6Q13 3.3 13 5.6Q13 7 11 7H5.1Q3.1 7 3.1 5.6z" fill="url(#og)"/></svg></div>
<div class="abs" style="left:323px;top:0;width:130px;height:24px"><div class="trk" style="background:#e6e8e8;border-color:#dcdede"></div><div class="tick" style="left:19px;background:#b8b8b8"></div><div class="tick" style="left:50px;background:#b8b8b8"></div><div class="tick" style="left:80px;background:#b8b8b8"></div><div class="tick" style="left:111px;background:#b8b8b8"></div><svg class="thumb" style="left:76px" width="8" height="15" viewBox="0 0 8 15"><path d="M0 0H8V10.5L4 15L0 10.5Z" fill="#0a76dc"/></svg></div>
<div class="cell" style="left:459.70px;width:146px;letter-spacing:-0.104px">Global Food Safety I</div>
<div class="cell" style="left:917.80px;width:200px;letter-spacing:-0.310px">Jane Doe</div>
</div>
<div class="row" style="top:537px;background:#fff;color:#111">
<div class="cell" style="left:4.50px;width:165px;letter-spacing:-0.672px">Read</div>
<div class="abs" style="left:203px;top:2px;line-height:0"><svg width="17" height="19" viewBox="0 0 17 19"><rect x="1.7" y="2.5" width="13.3" height="14.6" rx="1.4" fill="url(#cg)" stroke="#70798a" stroke-width="1.2"/><path d="M3.1 5.6Q3.1 3.3 5.6 3.2H6.1Q6.7 1 8.1 1Q9.5 1 10.1 3.2H10.6Q13 3.3 13 5.6Q13 7 11 7H5.1Q3.1 7 3.1 5.6z" fill="url(#og)"/></svg></div>
<div class="abs" style="left:323px;top:0;width:130px;height:24px"><div class="trk" style="background:#e6e8e8;border-color:#dcdede"></div><div class="tick" style="left:19px;background:#b8b8b8"></div><div class="tick" style="left:50px;background:#b8b8b8"></div><div class="tick" style="left:80px;background:#b8b8b8"></div><div class="tick" style="left:111px;background:#b8b8b8"></div><svg class="thumb" style="left:15px" width="8" height="15" viewBox="0 0 8 15"><path d="M0 0H8V10.5L4 15L0 10.5Z" fill="#0a76dc"/></svg></div>
<div class="cell" style="left:459.70px;width:146px;letter-spacing:-0.139px">Spink, Moyer et al. 2</div>
<div class="cell" style="left:917.80px;width:200px;letter-spacing:-0.310px">Jane Doe</div>
</div>
<div class="row" style="top:562px;background:#f1f1f1;color:#111">
<div class="cell" style="left:4.50px;width:165px;letter-spacing:-0.672px">Read</div>
<div class="abs" style="left:203px;top:2px;line-height:0"><svg width="17" height="19" viewBox="0 0 17 19"><rect x="1.7" y="2.5" width="13.3" height="14.6" rx="1.4" fill="url(#cg)" stroke="#70798a" stroke-width="1.2"/><path d="M3.1 5.6Q3.1 3.3 5.6 3.2H6.1Q6.7 1 8.1 1Q9.5 1 10.1 3.2H10.6Q13 3.3 13 5.6Q13 7 11 7H5.1Q3.1 7 3.1 5.6z" fill="url(#og)"/></svg></div>
<div class="abs" style="left:323px;top:0;width:130px;height:24px"><div class="trk" style="background:#e6e8e8;border-color:#dcdede"></div><div class="tick" style="left:19px;background:#b8b8b8"></div><div class="tick" style="left:50px;background:#b8b8b8"></div><div class="tick" style="left:80px;background:#b8b8b8"></div><div class="tick" style="left:111px;background:#b8b8b8"></div><svg class="thumb" style="left:15px" width="8" height="15" viewBox="0 0 8 15"><path d="M0 0H8V10.5L4 15L0 10.5Z" fill="#0a76dc"/></svg></div>
<div class="cell" style="left:458.70px;width:146px;letter-spacing:0.219px">Millward 2017-03-24</div>
<div class="cell" style="left:917.80px;width:200px;letter-spacing:-0.310px">Jane Doe</div>
</div>
<div class="row" style="top:587px;background:#fff;color:#111">
<div class="cell" style="left:4.50px;width:165px;letter-spacing:-0.672px">Read</div>
<div class="abs" style="left:203px;top:2px;line-height:0"><svg width="17" height="19" viewBox="0 0 17 19"><rect x="1.7" y="2.5" width="13.3" height="14.6" rx="1.4" fill="url(#cg)" stroke="#70798a" stroke-width="1.2"/><path d="M3.1 5.6Q3.1 3.3 5.6 3.2H6.1Q6.7 1 8.1 1Q9.5 1 10.1 3.2H10.6Q13 3.3 13 5.6Q13 7 11 7H5.1Q3.1 7 3.1 5.6z" fill="url(#og)"/></svg></div>
<div class="cell" style="left:231.20px;width:92px;color:#d81e2a;letter-spacing:0.052px">10/09/2018</div>
<div class="abs" style="left:323px;top:0;width:130px;height:24px"><div class="trk" style="background:#e6e8e8;border-color:#dcdede"></div><div class="tick" style="left:19px;background:#b8b8b8"></div><div class="tick" style="left:50px;background:#b8b8b8"></div><div class="tick" style="left:80px;background:#b8b8b8"></div><div class="tick" style="left:111px;background:#b8b8b8"></div><svg class="thumb" style="left:15px" width="8" height="15" viewBox="0 0 8 15"><path d="M0 0H8V10.5L4 15L0 10.5Z" fill="#0a76dc"/></svg></div>
<div class="cell" style="left:458.70px;width:146px;letter-spacing:0.023px">Barlow, Boobis et al.</div>
<div class="cell" style="left:917.80px;width:200px;letter-spacing:-0.310px">Jane Doe</div>
</div>
<div class="row" style="top:612px;background:#f1f1f1;color:#111">
<div class="cell" style="left:4.50px;width:165px;letter-spacing:-0.672px">Read</div>
<div class="abs" style="left:175px;top:7px;line-height:0"><svg width="18" height="10" viewBox="0 0 18 10"><path d="M7.7 0.9H4.6a3.75 3.75 0 0 0 0 7.5H7.7M10.2 0.9h3.2a3.75 3.75 0 0 1 0 7.5H10.2" fill="none" stroke="#111" stroke-width="2.2"/><path d="M4.6 4.65H13" stroke="#000" stroke-width="2" stroke-linecap="round"/></svg></div>
<div class="abs" style="left:203px;top:2px;line-height:0"><svg width="17" height="19" viewBox="0 0 17 19"><rect x="1.7" y="2.5" width="13.3" height="14.6" rx="1.4" fill="url(#cg)" stroke="#70798a" stroke-width="1.2"/><path d="M3.1 5.6Q3.1 3.3 5.6 3.2H6.1Q6.7 1 8.1 1Q9.5 1 10.1 3.2H10.6Q13 3.3 13 5.6Q13 7 11 7H5.1Q3.1 7 3.1 5.6z" fill="url(#og)"/></svg></div>
<div class="abs" style="left:323px;top:0;width:130px;height:24px"><div class="trk" style="background:#e6e8e8;border-color:#dcdede"></div><div class="tick" style="left:19px;background:#b8b8b8"></div><div class="tick" style="left:50px;background:#b8b8b8"></div><div class="tick" style="left:80px;background:#b8b8b8"></div><div class="tick" style="left:111px;background:#b8b8b8"></div><svg class="thumb" style="left:15px" width="8" height="15" viewBox="0 0 8 15"><path d="M0 0H8V10.5L4 15L0 10.5Z" fill="#0a76dc"/></svg></div>
<div class="cell" style="left:458.70px;width:146px;letter-spacing:0.118px">Manning, Soon 2016</div>
<div class="cell" style="left:917.80px;width:200px;letter-spacing:-0.310px">Jane Doe</div>
</div>
<div class="row" style="top:637px;background:#fff;color:#111">
<div class="cell" style="left:4.50px;width:165px;letter-spacing:-0.672px">Read</div>
<div class="abs" style="left:175px;top:7px;line-height:0"><svg width="18" height="10" viewBox="0 0 18 10"><path d="M7.7 0.9H4.6a3.75 3.75 0 0 0 0 7.5H7.7M10.2 0.9h3.2a3.75 3.75 0 0 1 0 7.5H10.2" fill="none" stroke="#111" stroke-width="2.2"/><path d="M4.6 4.65H13" stroke="#000" stroke-width="2" stroke-linecap="round"/></svg></div>
<div class="abs" style="left:203px;top:2px;line-height:0"><svg width="17" height="19" viewBox="0 0 17 19"><rect x="1.7" y="2.5" width="13.3" height="14.6" rx="1.4" fill="url(#cg)" stroke="#70798a" stroke-width="1.2"/><path d="M3.1 5.6Q3.1 3.3 5.6 3.2H6.1Q6.7 1 8.1 1Q9.5 1 10.1 3.2H10.6Q13 3.3 13 5.6Q13 7 11 7H5.1Q3.1 7 3.1 5.6z" fill="url(#og)"/></svg></div>
<div class="abs" style="left:323px;top:0;width:130px;height:24px"><div class="trk" style="background:#e6e8e8;border-color:#dcdede"></div><div class="tick" style="left:19px;background:#b8b8b8"></div><div class="tick" style="left:50px;background:#b8b8b8"></div><div class="tick" style="left:80px;background:#b8b8b8"></div><div class="tick" style="left:111px;background:#b8b8b8"></div><svg class="thumb" style="left:15px" width="8" height="15" viewBox="0 0 8 15"><path d="M0 0H8V10.5L4 15L0 10.5Z" fill="#0a76dc"/></svg></div>
<div class="cell" style="left:459.70px;width:146px;letter-spacing:-0.212px">Wang, He et al. 2016</div>
<div class="cell" style="left:917.80px;width:200px;letter-spacing:-0.310px">Jane Doe</div>
</div>
<div class="row" style="top:662px;background:#f1f1f1;color:#111">
<div class="cell" style="left:4.50px;width:165px;letter-spacing:-0.672px">Read</div>
<div class="abs" style="left:175px;top:7px;line-height:0"><svg width="18" height="10" viewBox="0 0 18 10"><path d="M7.7 0.9H4.6a3.75 3.75 0 0 0 0 7.5H7.7M10.2 0.9h3.2a3.75 3.75 0 0 1 0 7.5H10.2" fill="none" stroke="#111" stroke-width="2.2"/><path d="M4.6 4.65H13" stroke="#000" stroke-width="2" stroke-linecap="round"/></svg></div>
<div class="abs" style="left:203px;top:2px;line-height:0"><svg width="17" height="19" viewBox="0 0 17 19"><rect x="1.7" y="2.5" width="13.3" height="14.6" rx="1.4" fill="url(#cg)" stroke="#70798a" stroke-width="1.2"/><path d="M3.1 5.6Q3.1 3.3 5.6 3.2H6.1Q6.7 1 8.1 1Q9.5 1 10.1 3.2H10.6Q13 3.3 13 5.6Q13 7 11 7H5.1Q3.1 7 3.1 5.6z" fill="url(#og)"/></svg></div>
<div class="abs" style="left:323px;top:0;width:130px;height:24px"><div class="trk" style="background:#e6e8e8;border-color:#dcdede"></div><div class="tick" style="left:19px;background:#b8b8b8"></div><div class="tick" style="left:50px;background:#b8b8b8"></div><div class="tick" style="left:80px;background:#b8b8b8"></div><div class="tick" style="left:111px;background:#b8b8b8"></div><svg class="thumb" style="left:15px" width="8" height="15" viewBox="0 0 8 15"><path d="M0 0H8V10.5L4 15L0 10.5Z" fill="#0a76dc"/></svg></div>
<div class="cell" style="left:458.70px;width:146px;letter-spacing:0.118px">Manning, Soon 2016</div>
<div class="cell" style="left:917.80px;width:200px;letter-spacing:-0.310px">Jane Doe</div>
</div>
<div class="row" style="top:687px;background:#fff;color:#111">
<div class="cell" style="left:4.50px;width:165px;letter-spacing:0.313px">Update bibliographic i</div>
<div class="abs" style="left:203px;top:2px;line-height:0"><svg width="17" height="19" viewBox="0 0 17 19"><rect x="1.7" y="2.5" width="8.6" height="14.6" rx="1.3" fill="url(#cg)" stroke="#70798a" stroke-width="1.2"/><path d="M3 5.2Q3 3.3 5 3.2H5.6Q6 1 6.4 1Q6.8 1 7.2 3.2H8Q9.8 3.3 9.8 5.2Q9.8 6.6 8 6.6H4.8Q3 6.6 3 5.2z" fill="url(#og)"/><rect x="11.2" y="3.2" width="4.6" height="8.6" rx="1" fill="url(#rg)"/><circle cx="13.5" cy="15.6" r="2" fill="#d9381f"/></svg></div>
<div class="cell" style="left:231.20px;width:92px;color:#d81e2a;letter-spacing:0.052px">10/09/2018</div>
<div class="abs" style="left:323px;top:0;width:130px;height:24px"><div class="trk" style="background:#e6e8e8;border-color:#dcdede"></div><div class="tick" style="left:19px;background:#b8b8b8"></div><div class="tick" style="left:50px;background:#b8b8b8"></div><div class="tick" style="left:80px;background:#b8b8b8"></div><div class="tick" style="left:111px;background:#b8b8b8"></div><svg class="thumb" style="left:15px" width="8" height="15" viewBox="0 0 8 15"><path d="M0 0H8V10.5L4 15L0 10.5Z" fill="#0a76dc"/></svg></div>
<div class="cell" style="left:458.70px;width:146px;letter-spacing:-0.001px">Hong, Lee et al. [In p</div>
<div class="cell" style="left:765.30px;width:146px;letter-spacing:0.012px">This is a preprint arti</div>
<div class="cell" style="left:917.80px;width:200px;letter-spacing:-0.310px">Jane Doe</div>
</div>
<div class="row" style="top:712px;background:#f1f1f1;color:#111">
<div class="cell" style="left:5.50px;width:165px;letter-spacing:0.263px">Verify bibliographic inf</div>
<div class="abs" style="left:203px;top:2px;line-height:0"><svg width="17" height="19" viewBox="0 0 17 19"><rect x="1.7" y="2.5" width="13.3" height="14.6" rx="1.4" fill="url(#cg)" stroke="#70798a" stroke-width="1.2"/><path d="M3.1 5.6Q3.1 3.3 5.6 3.2H6.1Q6.7 1 8.1 1Q9.5 1 10.1 3.2H10.6Q13 3.3 13 5.6Q13 7 11 7H5.1Q3.1 7 3.1 5.6z" fill="url(#og)"/></svg></div>
<div class="abs" style="left:323px;top:0;width:130px;height:24px"><div class="trk" style="background:#e6e8e8;border-color:#dcdede"></div><div class="tick" style="left:19px;background:#b8b8b8"></div><div class="tick" style="left:50px;background:#b8b8b8"></div><div class="tick" style="left:80px;background:#b8b8b8"></div><div class="tick" style="left:111px;background:#b8b8b8"></div><svg class="thumb" style="left:15px" width="8" height="15" viewBox="0 0 8 15"><path d="M0 0H8V10.5L4 15L0 10.5Z" fill="#0a76dc"/></svg></div>
<div class="cell" style="left:459.70px;width:146px;letter-spacing:0.037px">Oliveira, Alewijn et al</div>
<div class="cell" style="left:917.80px;width:200px;letter-spacing:-0.310px">Jane Doe</div>
</div>
<div class="row" style="top:737px;background:#fff;color:#111">
<div class="cell" style="left:5.50px;width:165px;letter-spacing:0.263px">Verify bibliographic inf</div>
<div class="abs" style="left:203px;top:2px;line-height:0"><svg width="17" height="19" viewBox="0 0 17 19"><rect x="1.7" y="2.5" width="13.3" height="14.6" rx="1.4" fill="url(#cg)" stroke="#70798a" stroke-width="1.2"/><path d="M3.1 5.6Q3.1 3.3 5.6 3.2H6.1Q6.7 1 8.1 1Q9.5 1 10.1 3.2H10.6Q13 3.3 13 5.6Q13 7 11 7H5.1Q3.1 7 3.1 5.6z" fill="url(#og)"/></svg></div>
<div class="abs" style="left:323px;top:0;width:130px;height:24px"><div class="trk" style="background:#e6e8e8;border-color:#dcdede"></div><div class="tick" style="left:19px;background:#b8b8b8"></div><div class="tick" style="left:50px;background:#b8b8b8"></div><div class="tick" style="left:80px;background:#b8b8b8"></div><div class="tick" style="left:111px;background:#b8b8b8"></div><svg class="thumb" style="left:15px" width="8" height="15" viewBox="0 0 8 15"><path d="M0 0H8V10.5L4 15L0 10.5Z" fill="#0a76dc"/></svg></div>
<div class="cell" style="left:458.70px;width:146px;letter-spacing:-0.286px">Dai, Jiang 2013 – Fak</div>
<div class="cell" style="left:917.80px;width:200px;letter-spacing:-0.310px">Jane Doe</div>
</div>
<div class="row" style="top:762px;background:#f1f1f1;color:#111">
<div class="cell" style="left:5.50px;width:165px;letter-spacing:0.263px">Verify bibliographic inf</div>
<div class="abs" style="left:203px;top:2px;line-height:0"><svg width="17" height="19" viewBox="0 0 17 19"><rect x="1.7" y="2.5" width="13.3" height="14.6" rx="1.4" fill="url(#cg)" stroke="#70798a" stroke-width="1.2"/><path d="M3.1 5.6Q3.1 3.3 5.6 3.2H6.1Q6.7 1 8.1 1Q9.5 1 10.1 3.2H10.6Q13 3.3 13 5.6Q13 7 11 7H5.1Q3.1 7 3.1 5.6z" fill="url(#og)"/></svg></div>
<div class="abs" style="left:323px;top:0;width:130px;height:24px"><div class="trk" style="background:#e6e8e8;border-color:#dcdede"></div><div class="tick" style="left:19px;background:#b8b8b8"></div><div class="tick" style="left:50px;background:#b8b8b8"></div><div class="tick" style="left:80px;background:#b8b8b8"></div><div class="tick" style="left:111px;background:#b8b8b8"></div><svg class="thumb" style="left:15px" width="8" height="15" viewBox="0 0 8 15"><path d="M0 0H8V10.5L4 15L0 10.5Z" fill="#0a76dc"/></svg></div>
<div class="cell" style="left:458.70px;width:146px;letter-spacing:-0.137px">Kelepouris, Pramatar</div>
<div class="cell" style="left:917.80px;width:200px;letter-spacing:-0.310px">Jane Doe</div>
</div>
<div class="row" style="top:787px;background:#fff;color:#111">
<div class="cell" style="left:5.50px;width:165px;letter-spacing:0.263px">Verify bibliographic inf</div>
<div class="abs" style="left:203px;top:2px;line-height:0"><svg width="17" height="19" viewBox="0 0 17 19"><rect x="1.7" y="2.5" width="13.3" height="14.6" rx="1.4" fill="url(#cg)" stroke="#70798a" stroke-width="1.2"/><path d="M3.1 5.6Q3.1 3.3 5.6 3.2H6.1Q6.7 1 8.1 1Q9.5 1 10.1 3.2H10.6Q13 3.3 13 5.6Q13 7 11 7H5.1Q3.1 7 3.1 5.6z" fill="url(#og)"/></svg></div>
<div class="abs" style="left:323px;top:0;width:130px;height:24px"><div class="trk" style="background:#e6e8e8;border-color:#dcdede"></div><div class="tick" style="left:19px;background:#b8b8b8"></div><div class="tick" style="left:50px;background:#b8b8b8"></div><div class="tick" style="left:80px;background:#b8b8b8"></div><div class="tick" style="left:111px;background:#b8b8b8"></div><svg class="thumb" style="left:15px" width="8" height="15" viewBox="0 0 8 15"><path d="M0 0H8V10.5L4 15L0 10.5Z" fill="#0a76dc"/></svg></div>
<div class="cell" style="left:458.70px;width:146px;letter-spacing:-0.096px">Nascimento, Santos</div>
<div class="cell" style="left:917.80px;width:200px;letter-spacing:-0.310px">Jane Doe</div>
</div>
<div class="row" style="top:812px;background:#f1f1f1;color:#111">
<div class="cell" style="left:5.50px;width:165px;letter-spacing:0.263px">Verify bibliographic inf</div>
<div class="abs" style="left:203px;top:2px;line-height:0"><svg width="17" height="19" viewBox="0 0 17 19"><rect x="1.7" y="2.5" width="13.3" height="14.6" rx="1.4" fill="url(#cg)" stroke="#70798a" stroke-width="1.2"/><path d="M3.1 5.6Q3.1 3.3 5.6 3.2H6.1Q6.7 1 8.1 1Q9.5 1 10.1 3.2H10.6Q13 3.3 13 5.6Q13 7 11 7H5.1Q3.1 7 3.1 5.6z" fill="url(#og)"/></svg></div>
<div class="abs" style="left:323px;top:0;width:130px;height:24px"><div class="trk" style="background:#e6e8e8;border-color:#dcdede"></div><div class="tick" style="left:19px;background:#b8b8b8"></div><div class="tick" style="left:50px;background:#b8b8b8"></div><div class="tick" style="left:80px;background:#b8b8b8"></div><div class="tick" style="left:111px;background:#b8b8b8"></div><svg class="thumb" style="left:15px" width="8" height="15" viewBox="0 0 8 15"><path d="M0 0H8V10.5L4 15L0 10.5Z" fill="#0a76dc"/></svg></div>
<div class="cell" style="left:459.70px;width:146px;letter-spacing:-0.466px">Opara  2003 – Tracea</div>
<div class="cell" style="left:917.80px;width:200px;letter-spacing:-0.310px">Jane Doe</div>
</div>
<div class="row" style="top:837px;background:#fff;color:#111">
<div class="cell" style="left:5.50px;width:165px;letter-spacing:0.263px">Verify bibliographic inf</div>
<div class="abs" style="left:203px;top:2px;line-height:0"><svg width="17" height="19" viewBox="0 0 17 19"><rect x="1.7" y="2.5" width="13.3" height="14.6" rx="1.4" fill="url(#cg)" stroke="#70798a" stroke-width="1.2"/><path d="M3.1 5.6Q3.1 3.3 5.6 3.2H6.1Q6.7 1 8.1 1Q9.5 1 10.1 3.2H10.6Q13 3.3 13 5.6Q13 7 11 7H5.1Q3.1 7 3.1 5.6z" fill="url(#og)"/></svg></div>
<div class="abs" style="left:323px;top:0;width:130px;height:24px"><div class="trk" style="background:#e6e8e8;border-color:#dcdede"></div><div class="tick" style="left:19px;background:#b8b8b8"></div><div class="tick" style="left:50px;background:#b8b8b8"></div><div class="tick" style="left:80px;background:#b8b8b8"></div><div class="tick" style="left:111px;background:#b8b8b8"></div><svg class="thumb" style="left:15px" width="8" height="15" viewBox="0 0 8 15"><path d="M0 0H8V10.5L4 15L0 10.5Z" fill="#0a76dc"/></svg></div>
<div class="cell" style="left:458.70px;width:146px;letter-spacing:-0.004px">United States Congr</div>
<div class="cell" style="left:765.30px;width:146px;letter-spacing:-0.087px">Check how legal sou</div>
<div class="cell" style="left:917.80px;width:200px;letter-spacing:-0.310px">Jane Doe</div>
</div>
<div class="hl" style="left:302px;top:211px;width:1379px"></div>
<div class="hl" style="left:302px;top:236px;width:1379px"></div>
<div class="hl" style="left:302px;top:261px;width:1379px"></div>
<div class="hl" style="left:302px;top:286px;width:1379px"></div>
<div class="hl" style="left:302px;top:311px;width:1379px"></div>
<div class="hl" style="left:302px;top:336px;width:1379px"></div>
<div class="hl" style="left:302px;top:361px;width:1379px"></div>
<div class="hl" style="left:302px;top:386px;width:1379px"></div>
<div class="hl" style="left:302px;top:411px;width:1379px"></div>
<div class="hl" style="left:302px;top:436px;width:1379px"></div>
<div class="hl" style="left:302px;top:461px;width:1379px"></div>
<div class="hl" style="left:302px;top:486px;width:1379px"></div>
<div class="hl" style="left:302px;top:511px;width:1379px"></div>
<div class="hl" style="left:302px;top:536px;width:1379px"></div>
<div class="hl" style="left:302px;top:561px;width:1379px"></div>
<div class="hl" style="left:302px;top:586px;width:1379px"></div>
<div class="hl" style="left:302px;top:611px;width:1379px"></div>
<div class="hl" style="left:302px;top:636px;width:1379px"></div>
<div class="hl" style="left:302px;top:661px;width:1379px"></div>
<div class="hl" style="left:302px;top:686px;width:1379px"></div>
<div class="hl" style="left:302px;top:711px;width:1379px"></div>
<div class="hl" style="left:302px;top:736px;width:1379px"></div>
<div class="hl" style="left:302px;top:761px;width:1379px"></div>
<div class="hl" style="left:302px;top:786px;width:1379px"></div>
<div class="hl" style="left:302px;top:811px;width:1379px"></div>
<div class="hl" style="left:302px;top:836px;width:1379px"></div>
<div class="hl" style="left:302px;top:861px;width:1379px"></div>
<div class="hl" style="left:302px;top:886px;width:1379px"></div>
<div class="hl" style="left:302px;top:911px;width:1379px"></div>
<div class="hl" style="left:302px;top:936px;width:1379px"></div>
<div class="hl" style="left:302px;top:961px;width:1379px"></div>
<div class="hl" style="left:302px;top:186px;width:1379px;background:#c8cccb"></div>
<div class="vl" style="left:301px;top:986px;height:3px"></div><div class="vl" style="left:1681px;top:986px;height:3px"></div>
<div class="vl" style="left:471px;top:158px;height:830px"></div>
<div class="vl" style="left:500px;top:158px;height:830px"></div>
<div class="vl" style="left:529px;top:158px;height:830px"></div>
<div class="vl" style="left:625px;top:158px;height:830px"></div>
<div class="vl" style="left:755px;top:158px;height:830px"></div>
<div class="vl" style="left:908px;top:158px;height:830px"></div>
<div class="vl" style="left:1061px;top:158px;height:830px"></div>
<div class="vl" style="left:1214px;top:158px;height:830px"></div>
<div class="abs" style="left:302px;top:187px;width:1379px;height:1px;background:repeating-linear-gradient(90deg,#000 0 1px,#f6a64c 1px 2px)"></div>
<div class="abs" style="left:302px;top:210px;width:1379px;height:1px;background:repeating-linear-gradient(90deg,#000 0 1px,#f6a64c 1px 2px)"></div>
<div class="abs" style="left:302px;top:187px;width:1px;height:24px;background:repeating-linear-gradient(180deg,#000 0 1px,#f6a64c 1px 2px)"></div>
<div class="abs" style="left:1680px;top:187px;width:1px;height:24px;background:repeating-linear-gradient(180deg,#000 0 1px,#f6a64c 1px 2px)"></div>
<div class="abs" style="left:1691px;top:157px;width:229px;height:832px;background:#f1f1f1;border:1px solid #a9adab"></div>
<div class="abs" style="left:1692px;top:190px;width:227px;height:1px;background:#b4b9b6"></div>
<div class="abs" style="left:1804px;top:159px;width:115px;height:30px;background:#fffdf8"></div><div class="abs" style="left:1805px;top:160px;width:113px;height:28px;background:#0054a6"></div>
<svg class="abs" style="left:1810px;top:166px" width="17" height="17" viewBox="0 0 17 17"><defs><radialGradient id="qg" cx="0.35" cy="0.25" r="0.8"><stop offset="0" stop-color="#a8ccff"/><stop offset="0.45" stop-color="#3b74f2"/><stop offset="1" stop-color="#0c2a9a"/></radialGradient></defs><circle cx="8.5" cy="8.5" r="7.6" fill="url(#qg)"/><path d="M5.9 6.2a2.6 2.4 0 1 1 3.6 2.2c-.7.4-1 .8-1 1.5v.7" fill="none" stroke="#fff" stroke-width="1.9"/><circle cx="8.5" cy="13.3" r="1.1" fill="#fff"/></svg>

<div id="status" class="abs">
<div class="ssep" style="left:94px"></div>
<div class="ssep" style="left:203px"></div>
<div class="ssep" style="left:345px"></div>
<div class="ssep" style="left:513px"></div>
<div class="ssep" style="left:635px"></div>
<div class="ssep" style="left:792px"></div>
<div class="ssep" style="left:1608px"></div>
<div class="ssep" style="left:1648px"></div>
<svg class="abs" style="left:1626px;top:6px" width="17" height="18" viewBox="0 0 17 18"><path d="M4.6 9.2V5.6Q4.6 1 8.5 1Q12.4 1 12.4 5.6V9.2L15.5 11.4V12.4H1.5V11.4z" fill="#444"/><path d="M6.3 13.5H10.7L10.1 15.6Q8.5 16.9 6.9 15.6z" fill="#444"/></svg>
<div class="abs" style="left:1660px;top:2px;width:115px;height:27px;background:#0054a6;border:1px solid #14305c"></div>
<div class="abs" style="left:1786px;top:2px;width:134px;height:27px;background:#0054a6;border:1px solid #14305c;border-right:none"></div>

</div>
<span class="abs" style="left:27.60px;top:6px;font-size:15px;color:#1a1a1a;letter-spacing:-0.155px;white-space:nowrap;">DEMO Fake Food - A Global Problem: Task Planner - Cloud project - Citavi</span>
<span class="abs" style="left:5.80px;top:34px;font-size:15px;color:#fff;letter-spacing:-0.309px;white-space:nowrap;">File</span>
<span class="abs" style="left:39.60px;top:34px;font-size:15px;color:#fff;letter-spacing:-0.160px;white-space:nowrap;">Edit</span>
<span class="abs" style="left:77.30px;top:34px;font-size:15px;color:#fff;letter-spacing:-0.270px;white-space:nowrap;">View</span>
<span class="abs" style="left:120.30px;top:34px;font-size:15px;color:#fff;letter-spacing:-0.736px;white-space:nowrap;">Tasks</span>
<span class="abs" style="left:166.70px;top:34px;font-size:15px;color:#fff;letter-spacing:-0.561px;white-space:nowrap;">Lists</span>
<span class="abs" style="left:206.70px;top:34px;font-size:15px;color:#fff;letter-spacing:0.121px;white-space:nowrap;">Tools</span>
<span class="abs" style="left:253.30px;top:34px;font-size:15px;color:#fff;letter-spacing:0.297px;white-space:nowrap;">Window</span>
<span class="abs" style="left:319.70px;top:34px;font-size:15px;color:#fff;letter-spacing:0.264px;white-space:nowrap;">Help</span>
<span class="abs" style="left:31.50px;top:68px;font-size:15px;color:#111;letter-spacing:-0.187px;white-space:nowrap;">Project task</span>
<span class="abs" style="left:229.70px;top:68px;font-size:15px;color:#111;letter-spacing:-0.797px;white-space:nowrap;">Search</span>
<span class="abs" style="left:317.20px;top:68px;font-size:15px;color:#111;letter-spacing:-0.347px;white-space:nowrap;">Task list</span>
<span class="abs" style="left:428.40px;top:68px;font-size:15px;color:#111;letter-spacing:-0.048px;white-space:nowrap;">Columns</span>
<span class="abs" style="left:529.30px;top:68px;font-size:15px;color:#111;letter-spacing:0.288px;white-space:nowrap;">Thought</span>
<span class="abs" style="left:35.80px;top:117px;font-size:16px;color:#1f3f66;letter-spacing:0.020px;white-space:nowrap;">References</span>
<span class="abs" style="left:163.50px;top:117px;font-size:16px;color:#1f3f66;letter-spacing:0.591px;white-space:nowrap;">Knowledge</span>
<span class="abs" style="left:293.75px;top:117px;font-size:16px;color:#fff;letter-spacing:-0.475px;white-space:nowrap;">Tasks</span>
<span class="abs" style="left:377.20px;top:117px;font-size:16px;color:#1f3f66;letter-spacing:0.224px;white-space:nowrap;">AI Assistant</span>
<span class="abs" style="left:519.40px;top:116px;font-size:18px;color:#111;letter-spacing:-0.402px;white-space:nowrap;">All tasks</span>
<span class="abs" style="left:19.60px;top:165px;font-size:15px;color:#fff;letter-spacing:-0.302px;white-space:nowrap;">Quick select</span>
<span class="abs" style="left:116.00px;top:165px;font-size:15px;color:#111;letter-spacing:0.027px;white-space:nowrap;">Advanced selection</span>
<span class="abs" style="left:22.00px;top:221px;font-size:15px;color:#222;letter-spacing:-0.064px;white-space:nowrap;">Common selections</span>
<span class="abs" style="left:63.30px;top:249px;font-size:15px;color:#1a1a1a;letter-spacing:-0.267px;white-space:nowrap;">My tasks</span>
<span class="abs" style="left:64.30px;top:276px;font-size:15px;color:#1a1a1a;letter-spacing:-0.256px;white-space:nowrap;">All tasks</span>
<span class="abs" style="left:64.30px;top:303px;font-size:15px;color:#1a1a1a;letter-spacing:-0.466px;white-space:nowrap;">Current tasks</span>
<span class="abs" style="left:63.30px;top:330px;font-size:15px;color:#1a1a1a;letter-spacing:0.019px;white-space:nowrap;">Important tasks</span>
<span class="abs" style="left:63.30px;top:356px;font-size:15px;color:#1a1a1a;letter-spacing:-0.230px;white-space:nowrap;">Project tasks</span>
<span class="abs" style="left:40.70px;top:411px;font-size:15px;color:#1a1a1a;letter-spacing:0.079px;white-space:nowrap;">Hide completed tasks</span>
<span class="abs" style="left:41.70px;top:437px;font-size:15px;color:#1a6fd0;letter-spacing:-0.480px;white-space:nowrap;">Refresh</span>
<span class="abs" style="left:304.60px;top:163px;font-size:15px;color:#111;letter-spacing:-0.881px;white-space:nowrap;">Task</span>
<span class="abs" style="left:531.30px;top:163px;font-size:15px;color:#111;letter-spacing:0.280px;white-space:nowrap;">Due date</span>
<span class="abs" style="left:628.10px;top:163px;font-size:15px;color:#111;letter-spacing:-0.205px;white-space:nowrap;">Status</span>
<span class="abs" style="left:758.00px;top:163px;font-size:15px;color:#111;letter-spacing:0.288px;white-space:nowrap;">Short title</span>
<span class="abs" style="left:910.30px;top:163px;font-size:15px;color:#111;letter-spacing:0.186px;white-space:nowrap;">Locations</span>
<span class="abs" style="left:1063.30px;top:163px;font-size:15px;color:#111;letter-spacing:0.329px;white-space:nowrap;">Notes</span>
<span class="abs" style="left:1217.00px;top:163px;font-size:15px;color:#111;letter-spacing:0.076px;white-space:nowrap;">Assigned to</span>
<span class="abs" style="left:1836.70px;top:165px;font-size:15px;color:#fff;letter-spacing:-0.013px;white-space:nowrap;">Quick Help</span>
<span class="abs" style="left:1715.20px;top:220px;font-size:15px;color:#e0202c;letter-spacing:0.134px;white-space:nowrap;">Knowledge items</span>
<span class="abs" style="left:1716.10px;top:246px;font-size:14.5px;color:#1a1a1a;letter-spacing:0.026px;white-space:nowrap;line-height:20px">The number in parentheses</span>
<span class="abs" style="left:1716.10px;top:266px;font-size:14.5px;color:#1a1a1a;letter-spacing:0.135px;white-space:nowrap;line-height:20px">next to <b>All</b> represents the</span>
<span class="abs" style="left:1716.10px;top:286px;font-size:14.5px;color:#1a1a1a;letter-spacing:0.451px;white-space:nowrap;line-height:20px">total number of quotations</span>
<span class="abs" style="left:1716.10px;top:306px;font-size:14.5px;color:#1a1a1a;letter-spacing:0.112px;white-space:nowrap;line-height:20px">and thoughts. Drag a</span>
<span class="abs" style="left:1716.10px;top:326px;font-size:14.5px;color:#1a1a1a;letter-spacing:0.379px;white-space:nowrap;line-height:20px">knowledge item onto a</span>
<span class="abs" style="left:1716.10px;top:346px;font-size:14.5px;color:#1a1a1a;letter-spacing:0.210px;white-space:nowrap;line-height:20px">keyword, category, or</span>
<span class="abs" style="left:1716.10px;top:366px;font-size:14.5px;color:#1a1a1a;letter-spacing:0.335px;white-space:nowrap;line-height:20px">group to apply it or assign</span>
<span class="abs" style="left:1716.10px;top:386px;font-size:14.5px;color:#1a1a1a;letter-spacing:0.502px;white-space:nowrap;line-height:20px">it to the item.</span>
<span class="abs" style="left:2.30px;top:996px;font-size:15px;color:#111;letter-spacing:0.562px;white-space:nowrap;">No grouping</span>
<span class="abs" style="left:109.30px;top:996px;font-size:15px;color:#111;letter-spacing:-0.181px;white-space:nowrap;">29 tasks total</span>
<span class="abs" style="left:218.30px;top:996px;font-size:15px;color:#111;letter-spacing:-0.025px;white-space:nowrap;">2 completed tasks</span>
<span class="abs" style="left:360.00px;top:996px;font-size:15px;color:#111;letter-spacing:0.031px;white-space:nowrap;">27 uncompleted tasks</span>
<span class="abs" style="left:528.30px;top:996px;font-size:15px;color:#111;letter-spacing:-0.311px;white-space:nowrap;">27 tasks shown</span>
<span class="abs" style="left:649.70px;top:996px;font-size:15px;color:#111;letter-spacing:-0.302px;white-space:nowrap;">1 selected tasks task</span>
<span class="abs" style="left:1674.00px;top:996px;font-size:15px;color:#fff;letter-spacing:0.096px;white-space:nowrap;">1 user online</span>
<span class="abs" style="left:1799.70px;top:996px;font-size:15px;color:#fff;letter-spacing:-0.124px;white-space:nowrap;">Recent changes</span>
</body></html>
